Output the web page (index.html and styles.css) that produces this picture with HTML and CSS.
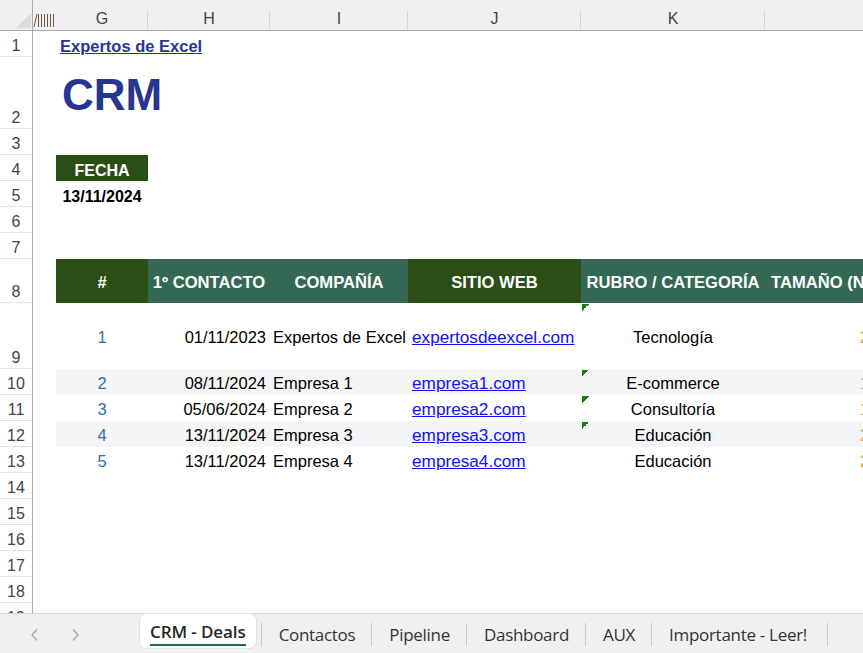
FILE: index.html
```
<!DOCTYPE html>
<html>
<head>
  <title>CRM - Deals</title>
  <link rel="stylesheet" href="styles.css">
</head>
<body>

<div class="sheet">
<table class="grid">
  <colgroup>
    <col class="w-row">
    <col class="w-hid">
    <col class="w-g">
    <col class="w-h">
    <col class="w-i">
    <col class="w-j">
    <col class="w-k">
    <col class="w-l">
  </colgroup>

  <tr class="colheads">
    <td class="corner">
      <svg width="33" height="30" viewBox="0 0 33 30"><polygon points="31,13 31,28 16,28" fill="#dcdcdc"/></svg>
    </td>
    <td class="hidden-cols">
      <svg width="23" height="30" viewBox="0 0 23 30">
        <g stroke="#6b5a45" stroke-width="1">
          <path d="M1 27 L4 14"/>
          <path d="M5.5 14 V27"/>
          <path d="M8.5 14 V27"/>
          <path d="M11.5 14 V27"/>
          <path d="M14.5 14 V27"/>
          <path d="M17.5 14 V27"/>
          <path d="M20.5 14 V27"/>
        </g>
      </svg>
    </td>
    <td class="letter">G</td>
    <td class="letter">H</td>
    <td class="letter">I</td>
    <td class="letter">J</td>
    <td class="letter">K</td>
    <td class="letter"></td>
  </tr>

  <tr class="h26">
    <td class="rownum">1</td><td></td>
    <td class="brand"><a href="#">Expertos de Excel</a></td>
    <td></td><td></td><td></td><td></td><td></td>
  </tr>
  <tr class="h72">
    <td class="rownum">2</td><td></td>
    <td class="title">CRM</td>
    <td></td><td></td><td></td><td></td><td></td>
  </tr>
  <tr class="h26">
    <td class="rownum">3</td><td></td><td></td><td></td><td></td><td></td><td></td><td></td>
  </tr>
  <tr class="h26">
    <td class="rownum">4</td><td></td>
    <td class="date-label">FECHA</td>
    <td></td><td></td><td></td><td></td><td></td>
  </tr>
  <tr class="h26">
    <td class="rownum">5</td><td></td>
    <td class="date-value">13/11/2024</td>
    <td></td><td></td><td></td><td></td><td></td>
  </tr>
  <tr class="h26">
    <td class="rownum">6</td><td></td><td></td><td></td><td></td><td></td><td></td><td></td>
  </tr>
  <tr class="h26">
    <td class="rownum">7</td><td></td><td></td><td></td><td></td><td></td><td></td><td></td>
  </tr>

  <tr class="h44 thead">
    <td class="rownum">8</td><td></td>
    <td class="dark">#</td>
    <td class="teal">1º CONTACTO</td>
    <td class="teal">COMPAÑÍA</td>
    <td class="dark">SITIO WEB</td>
    <td class="teal">RUBRO / CATEGORÍA</td>
    <td class="teal more">TAMAÑO (NRO. EMPLEADOS)</td>
  </tr>

  <tr class="h66 row">
    <td class="rownum">9</td><td></td>
    <td class="num">1</td>
    <td class="date">01/11/2023</td>
    <td class="comp">Expertos de Excel</td>
    <td class="web"><a href="#">expertosdeexcel.com</a></td>
    <td class="cat flag">Tecnología</td>
    <td class="size">2</td>
  </tr>
  <tr class="h26 row band">
    <td class="rownum">10</td><td></td>
    <td class="num">2</td>
    <td class="date">08/11/2024</td>
    <td class="comp">Empresa 1</td>
    <td class="web"><a href="#">empresa1.com</a></td>
    <td class="cat flag">E-commerce</td>
    <td class="size">1</td>
  </tr>
  <tr class="h26 row">
    <td class="rownum">11</td><td></td>
    <td class="num">3</td>
    <td class="date">05/06/2024</td>
    <td class="comp">Empresa 2</td>
    <td class="web"><a href="#">empresa2.com</a></td>
    <td class="cat flag">Consultoría</td>
    <td class="size">1</td>
  </tr>
  <tr class="h26 row band">
    <td class="rownum">12</td><td></td>
    <td class="num">4</td>
    <td class="date">13/11/2024</td>
    <td class="comp">Empresa 3</td>
    <td class="web"><a href="#">empresa3.com</a></td>
    <td class="cat flag">Educación</td>
    <td class="size">2</td>
  </tr>
  <tr class="h26 row">
    <td class="rownum">13</td><td></td>
    <td class="num">5</td>
    <td class="date">13/11/2024</td>
    <td class="comp">Empresa 4</td>
    <td class="web"><a href="#">empresa4.com</a></td>
    <td class="cat">Educación</td>
    <td class="size">2</td>
  </tr>

  <tr class="h26"><td class="rownum">14</td><td></td><td></td><td></td><td></td><td></td><td></td><td></td></tr>
  <tr class="h26"><td class="rownum">15</td><td></td><td></td><td></td><td></td><td></td><td></td><td></td></tr>
  <tr class="h26"><td class="rownum">16</td><td></td><td></td><td></td><td></td><td></td><td></td><td></td></tr>
  <tr class="h26"><td class="rownum">17</td><td></td><td></td><td></td><td></td><td></td><td></td><td></td></tr>
  <tr class="h26"><td class="rownum">18</td><td></td><td></td><td></td><td></td><td></td><td></td><td></td></tr>
  <tr class="h26"><td class="rownum">19</td><td></td><td></td><td></td><td></td><td></td><td></td><td></td></tr>
</table>
</div>

<div class="tabs">
  <div class="nav">
    <svg width="10" height="14" viewBox="0 0 10 14"><path d="M7 1.5 L2 7 L7 12.5" fill="none" stroke="#a6a6a6" stroke-width="1.3"/></svg>
    <svg width="10" height="14" viewBox="0 0 10 14"><path d="M3 1.5 L8 7 L3 12.5" fill="none" stroke="#a6a6a6" stroke-width="1.3"/></svg>
  </div>
  <div class="tab active"><span>CRM - Deals</span></div>
  <span class="sep"></span>
  <div class="tab">Contactos</div>
  <span class="sep"></span>
  <div class="tab">Pipeline</div>
  <span class="sep"></span>
  <div class="tab">Dashboard</div>
  <span class="sep"></span>
  <div class="tab">AUX</div>
  <span class="sep"></span>
  <div class="tab last">Importante - Leer!</div>
  <span class="sep"></span>
</div>

</body>
</html>
```

FILE: styles.css
```
body {
  margin: 0;
  width: 863px;
  height: 653px;
  overflow: hidden;
  background: #fff;
  font-family: "Liberation Sans", Arial, sans-serif;
  font-size: 16px;
  color: #000;
}

.sheet {
  height: 613px;
  overflow: hidden;
}

.grid {
  table-layout: fixed;
  width: 863px;
  border-collapse: separate;
  border-spacing: 0;
}

td {
  padding: 0;
  white-space: nowrap;
  box-sizing: border-box;
}

.w-row { width: 33px; }
.w-hid { width: 23px; }
.w-g { width: 92px; }
.w-h { width: 122px; }
.w-i { width: 138px; }
.w-j { width: 173px; }
.w-k { width: 184px; }
.w-l { width: 98px; }

.h26 { height: 26px; }
.h44 { height: 44px; }
.h66 { height: 66px; }
.h72 { height: 72px; }

/* column letters */
.colheads { height: 31px; }

.colheads td {
  background: #f0f0f0;
  border-bottom: 1px solid #ababab;
  vertical-align: bottom;
  line-height: 0;
}

.colheads .letter {
  text-align: center;
  color: #444;
  line-height: 18px;
  padding-bottom: 2px;
  background-image: linear-gradient(#d6d6d6, #d6d6d6);
  background-size: 1px 19px;
  background-position: right bottom;
  background-repeat: no-repeat;
}

.colheads .letter:last-child {
  background-image: none;
}

.colheads .corner {
  border-right: 1px solid #ababab;
}

/* row numbers */
.rownum {
  text-align: center;
  vertical-align: bottom;
  color: #444;
  padding-bottom: 1px;
  border-right: 1px solid #ababab;
  border-bottom: 1px solid #e1e1e1;
  background: #fff;
}

/* top block */
.brand {
  vertical-align: bottom;
  padding: 0 0 1px 4px;
  overflow: visible;
}

.brand a {
  color: #283593;
  font-weight: bold;
  font-size: 16.5px;
}

.title {
  vertical-align: bottom;
  padding: 0 0 9px 6px;
  color: #283593;
  font-weight: bold;
  font-size: 44px;
  overflow: visible;
}

.date-label {
  background: #2b4e16;
  color: #fff;
  font-weight: bold;
  text-align: center;
  vertical-align: bottom;
  padding-bottom: 1px;
}

.date-value {
  font-weight: bold;
  text-align: center;
  vertical-align: bottom;
  padding-bottom: 1px;
}

/* table header */
.thead td {
  color: #fff;
  font-weight: bold;
  font-size: 16.6px;
  text-align: center;
  vertical-align: middle;
  padding-top: 3px;
  overflow: hidden;
}

.thead .rownum {
  color: #444;
  font-weight: normal;
  font-size: 16px;
  vertical-align: bottom;
  padding-top: 0;
}

.thead .dark { background: #2b4e16; }
.thead .teal { background: #356854; }

.thead .more {
  text-align: left;
  padding-left: 6px;
}

/* data rows */
.row td {
  vertical-align: middle;
  padding-top: 2px;
  overflow: hidden;
  font-size: 16.5px;
  line-height: 20px;
}

.row .rownum {
  vertical-align: bottom;
  padding-top: 0;
  font-size: 16px;
  line-height: normal;
}

.row.band td:nth-child(n+3) {
  background-color: #f4f5f7;
}

.num {
  text-align: center;
  color: #2e6fad;
}

.date {
  text-align: right;
  padding-right: 4px;
}

.comp {
  padding-left: 3px;
}

.web {
  padding-left: 4px;
}

.web a {
  color: #1010ff;
  font-size: 17.2px;
}

.cat {
  text-align: center;
}

.flag {
  background-image: linear-gradient(135deg, #167a16 50%, transparent 50%);
  background-size: 7px 7px;
  background-repeat: no-repeat;
  background-position: 1px 1px;
}

.size {
  padding-left: 95px;
  color: #f0a032;
}

/* sheet tabs */
.tabs {
  height: 40px;
  box-sizing: border-box;
  border-top: 1px solid #d6d6d6;
  background: #f0f0f0;
  display: flex;
  align-items: center;
  font-family: "Open Sans", "Noto Sans", sans-serif;
  font-size: 17px;
  color: #333;
}

.nav {
  width: 140px;
  display: flex;
  align-items: center;
  gap: 30px;
  padding-left: 30px;
  box-sizing: border-box;
  margin-top: 3px;
}

.tab {
  padding: 2px 16px 0 17px;
  letter-spacing: -0.3px;
}

.tab.last {
  padding-right: 20px;
}

.tab.active {
  align-self: flex-start;
  height: 34px;
  box-sizing: border-box;
  margin-top: 0;
  padding: 6px 10px 0 10px;
  background: #fff;
  border-radius: 6px;
  box-shadow: 0 0 0 1px #e2e2e2;
  font-weight: 600;
  color: #262626;
  margin-right: 5px;
  letter-spacing: -0.1px;
}

.tab.active span {
  display: inline-block;
  line-height: 20px;
  padding-bottom: 2px;
  border-bottom: 2px solid #1e7145;
}

.sep {
  width: 1px;
  height: 23px;
  background: #c8c8c8;
  margin-top: 2px;
}
```
